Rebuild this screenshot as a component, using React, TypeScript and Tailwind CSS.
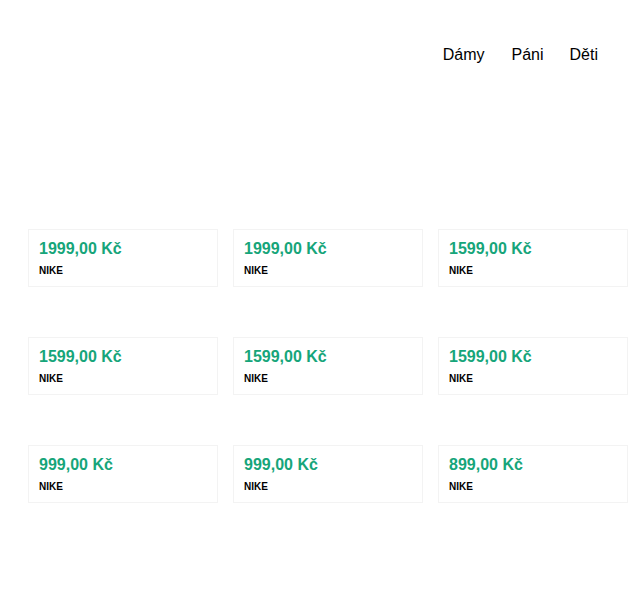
const products = [
  { price: "1999,00 Kč", brand: "NIKE" },
  { price: "1999,00 Kč", brand: "NIKE" },
  { price: "1599,00 Kč", brand: "NIKE" },
  { price: "1599,00 Kč", brand: "NIKE" },
  { price: "1599,00 Kč", brand: "NIKE" },
  { price: "1599,00 Kč", brand: "NIKE" },
  { price: "999,00 Kč", brand: "NIKE" },
  { price: "999,00 Kč", brand: "NIKE" },
  { price: "899,00 Kč", brand: "NIKE" },
];

export default function App() {
  return (
    <div className="min-h-[600px] bg-white text-black" style={{ fontFamily: '"Liberation Sans", Arial, sans-serif' }}>
      <header className="flex h-[110px] items-center justify-end pr-[42px]">
        <nav className="flex gap-[26px] text-base">
          <a className="mr-px">Dámy</a>
          <a>Páni</a>
          <a>Děti</a>
        </nav>
      </header>

      <main className="grid grid-cols-[190px_190px_190px] gap-x-[15px] gap-y-[50px] pl-[28px] pt-[119px]">
        {products.map((p, i) => (
          <div key={i} className="h-[58px] border border-[#f3f3f3] px-[10px] pt-[9px]">
            <div className="text-base font-bold leading-5 text-[#16a57a]">{p.price}</div>
            <div className="mt-[6px] text-[10px] font-bold leading-3">{p.brand}</div>
          </div>
        ))}
      </main>
    </div>
  );
}
